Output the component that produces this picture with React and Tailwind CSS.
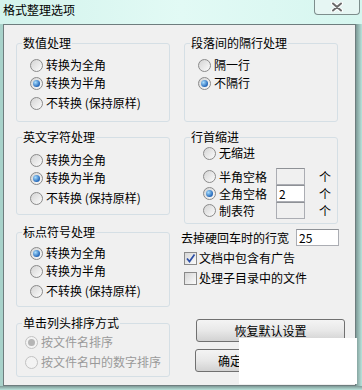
import React from "react";

function Radio({ checked, disabled }) {
  return (
    <span
      className={`flex items-center justify-center w-[13px] h-[13px] shrink-0 rounded-full border ${
        disabled
          ? "border-[#c2c2c2] bg-[#f3f3f3]"
          : "border-[#8a8a8a] bg-linear-to-br from-[#d4d4d4] to-[#fcfcfc]"
      }`}
    >
      {checked && (
        <span
          className={`w-[7px] h-[7px] rounded-full ${
            disabled
              ? "bg-[#b5b5b5]"
              : "bg-[radial-gradient(circle_at_35%_35%,#a8deff,#1a5fb4_75%)]"
          }`}
        />
      )}
    </span>
  );
}

function Option({ label, checked, disabled, className = "" }) {
  return (
    <div className={`flex items-center h-[18px] gap-[3px] ${className}`}>
      <Radio checked={checked} disabled={disabled} />
      <span className={disabled ? "text-[#9a9a9a]" : "text-black"}>{label}</span>
    </div>
  );
}

function Check({ checked, label, className = "" }) {
  return (
    <div className={`flex items-center h-[16px] gap-[2px] ${className}`}>
      <span className="flex items-center justify-center w-[13px] h-[13px] shrink-0 border border-[#8a8a8a] bg-linear-to-br from-[#d6d6d6] to-[#fbfbfb]">
        {checked && (
          <svg width="11" height="11" viewBox="0 0 11 11">
            <path d="M2 5.5 L4.5 8.5 L9.5 1.5" fill="none" stroke="#2b4ea6" strokeWidth="1.7" />
          </svg>
        )}
      </span>
      <span>{label}</span>
    </div>
  );
}

function Group({ title, className = "", children }) {
  return (
    <fieldset className={`w-[154px] border border-[#d5dfe5] rounded-[3px] ${className}`}>
      <legend className="ml-[5px] px-[1px] leading-[14px]">{title}</legend>
      {children}
    </fieldset>
  );
}

function Box({ value, className = "" }) {
  return (
    <span
      className={`flex items-center px-[2px] border border-[#abadb3] border-t-[#8e9196] ${
        value ? "bg-white" : "bg-[#f0f0f0]"
      } ${className}`}
    >
      {value}
    </span>
  );
}

export default function App() {
  return (
    <div className="relative w-[362px] h-[390px] overflow-hidden bg-[#d6f5ee] text-[12px] leading-[14px] text-black font-['Noto_Sans_CJK_SC',sans-serif]">
      {/* title bar */}
      <div className="flex justify-between h-[24px] bg-linear-to-r from-[#d3f3ec] via-[#e2faf5] to-[#d6f6ef]">
        <span className="pl-[3px] pt-[3px] text-[12px]">格式整理选项</span>
        <div className="flex items-center justify-center w-[46px] h-[15px] mr-[2px] border border-t-0 border-[#7d8d8c] rounded-b-[4px] bg-[#e6f6f3]">
          <svg width="14" height="10" viewBox="0 0 14 10">
            <path d="M3 1.5 L11 8.5 M11 1.5 L3 8.5" stroke="#ffffff" strokeWidth="4" strokeLinecap="round" />
            <path d="M3 1.5 L11 8.5 M11 1.5 L3 8.5" stroke="#6b6b6b" strokeWidth="2" strokeLinecap="round" />
          </svg>
        </div>
      </div>

      <div className="flex h-[362px]">
        <div className="w-[3px] bg-[#a8d2ca]" />
        <div className="flex w-[353px] border border-[#6e7d7e] bg-[#f0f0f0] pl-[12px] gap-[14px]">
          {/* left column */}
          <div className="flex flex-col w-[154px]">
            <Group title="数值处理" className="mt-[11px] h-[86px]">
              <div className="pl-[13px] pt-[6px]">
                <Option label="转换为全角" />
                <Option label="转换为半角" checked />
                <Option label="不转换 (保持原样)" className="mt-[2px]" />
              </div>
            </Group>
            <Group title="英文字符处理" className="mt-[8px] h-[85px]">
              <div className="pl-[13px] pt-[7px]">
                <Option label="转换为全角" />
                <Option label="转换为半角" checked />
                <Option label="不转换 (保持原样)" className="mt-[2px]" />
              </div>
            </Group>
            <Group title="标点符号处理" className="mt-[10px] h-[82px]">
              <div className="pl-[13px] pt-[5px]">
                <Option label="转换为全角" checked />
                <Option label="转换为半角" />
                <Option label="不转换 (保持原样)" className="mt-[2px]" />
              </div>
            </Group>
            <Group title="单击列头排序方式" className="mt-[9px] h-[61px] w-[153px]">
              <div className="pl-[8px] pt-[3px]">
                <Option label="按文件名排序" checked disabled />
                <Option label="按文件名中的数字排序" disabled className="mt-[2px]" />
              </div>
            </Group>
          </div>

          {/* right column */}
          <div className="flex flex-col w-[162px]">
            <Group title="段落间的隔行处理" className="mt-[11px] h-[86px]">
              <div className="pl-[13px] pt-[6px]">
                <Option label="隔一行" />
                <Option label="不隔行" checked />
              </div>
            </Group>
            <Group title="行首缩进" className="mt-[8px] h-[94px]">
              <div className="pl-[18px]">
                <Option label="无缩进" />
                <div className="mt-[6px] flex flex-col">
                  {[
                    { label: "半角空格", value: "" },
                    { label: "全角空格", value: "2", checked: true },
                    { label: "制表符", value: "" },
                  ].map((r) => (
                    <div key={r.label} className="flex items-center h-[17px]">
                      <div className="flex items-center gap-[3px] w-[73px]">
                        <Radio checked={r.checked} />
                        <span>{r.label}</span>
                      </div>
                      <Box value={r.value} className="w-[29px] h-[17px]" />
                      <span className="ml-[14px]">个</span>
                    </div>
                  ))}
                </div>
              </div>
            </Group>
            <div className="flex items-center h-[17px] mt-[5px] -ml-[3px]">
              <span>去掉硬回车时的行宽</span>
              <Box value="25" className="ml-[7px] w-[43px] h-[17px]" />
            </div>
            <Check checked label="文档中包含有广告" className="mt-[4px]" />
            <Check label="处理子目录中的文件" className="mt-[4px]" />
            <button className="mt-[33px] ml-[12px] w-[149px] h-[23px] border border-[#707070] rounded-[3px] bg-linear-to-b from-[#f4f4f4] via-[#e8e8e8] to-[#d2d2d2] text-[12px]">
              恢复默认设置
            </button>
            <div className="flex mt-[7px] ml-[11px] gap-[10px]">
              <button className="w-[70px] h-[23px] border border-[#707070] rounded-[3px] bg-linear-to-b from-[#f4f4f4] via-[#e8e8e8] to-[#d2d2d2] text-[12px]">
                确定
              </button>
              <button className="w-[70px] h-[23px] border border-[#707070] rounded-[3px] bg-linear-to-b from-[#f4f4f4] via-[#e8e8e8] to-[#d2d2d2] text-[12px]">
                取消
              </button>
            </div>
          </div>
        </div>
        <div className="w-[6px] bg-linear-to-r from-[#7e9a97] to-[#b9e3db]" />
      </div>
      <div className="h-[4px] bg-linear-to-b from-[#7e9a97] to-[#b9e3db]" />

      {/* white patch over the lower right corner */}
      <div className="absolute left-[239px] top-[338px] w-[118px] h-[46px] bg-white" />
    </div>
  );
}
